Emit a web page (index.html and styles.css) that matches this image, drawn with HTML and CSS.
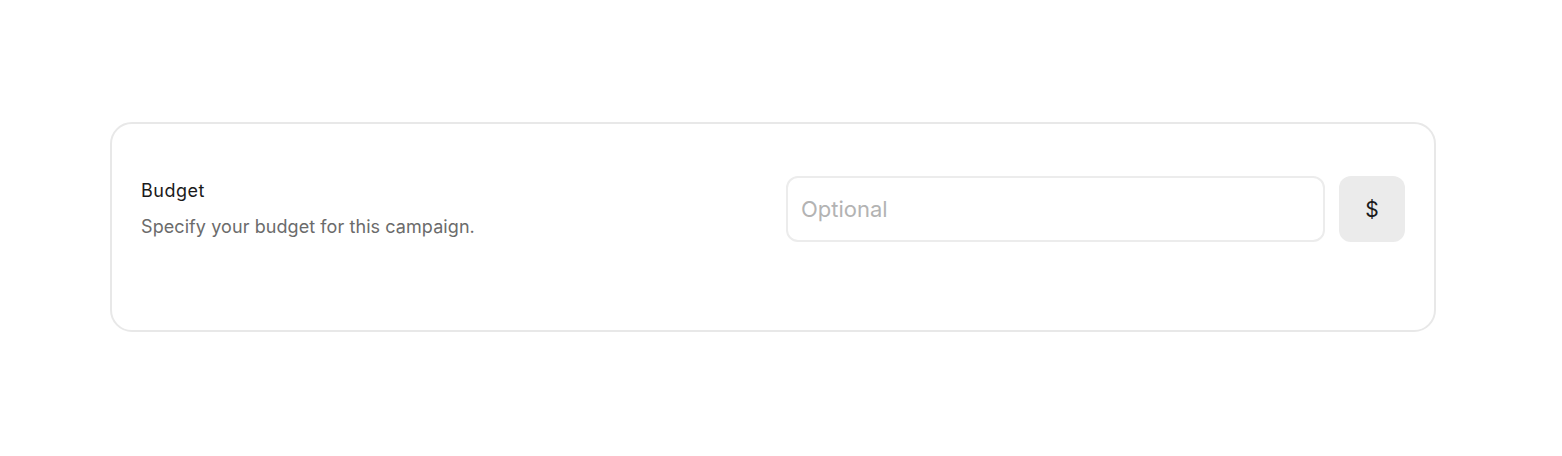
FILE: index.html
```html
<!DOCTYPE html>
<html>
<head>
<meta charset="utf-8">
<link rel="stylesheet" href="styles.css">
</head>
<body>
<div class="page">
  <section class="card">
    <div class="row">
      <div class="info">
        <div class="label">Budget</div>
        <div class="desc">Specify your budget for this campaign.</div>
      </div>
      <div class="control">
        <input class="field" type="text" placeholder="Optional">
        <div class="unit">$</div>
      </div>
    </div>
  </section>
</div>
</body>
</html>
```

FILE: styles.css
```css
* { box-sizing: border-box; }
html, body { margin: 0; padding: 0; background: #fff; }
body { font-family: Inter, "Liberation Sans", sans-serif; }
.page {
  padding: 122px 126px 0 110px;
}
.card {
  width: 1326px;
  height: 210px;
  border: 2px solid #e8e8e8;
  border-radius: 22px;
  padding: 52px 29px 0 29px;
}
.row {
  display: flex;
  align-items: flex-start;
}
.info {
  flex: 1;
  padding-top: 4px;
}
.label {
  font-size: 18px;
  line-height: 22px;
  color: #1a1a1a;
  font-weight: 400;
  letter-spacing: 0.5px;
}
.desc {
  margin-top: 14px;
  font-size: 18px;
  line-height: 22px;
  color: #6b6b6b;
  letter-spacing: 0.08px;
}
.control {
  width: 619px;
  display: flex;
  gap: 14px;
}
.field {
  flex: 1;
  height: 66px;
  border: 2px solid #ececec;
  border-radius: 12px;
  padding: 0 13px;
  font-family: inherit;
  font-size: 22px;
  color: #1a1a1a;
  outline: none;
  background: #fff;
}
.field::placeholder { color: #b3b3b3; }
.unit {
  width: 66px;
  height: 66px;
  background: #ebebeb;
  border-radius: 12px;
  display: flex;
  align-items: center;
  justify-content: center;
  font-size: 21px;
  color: #1a1a1a;
}
```
